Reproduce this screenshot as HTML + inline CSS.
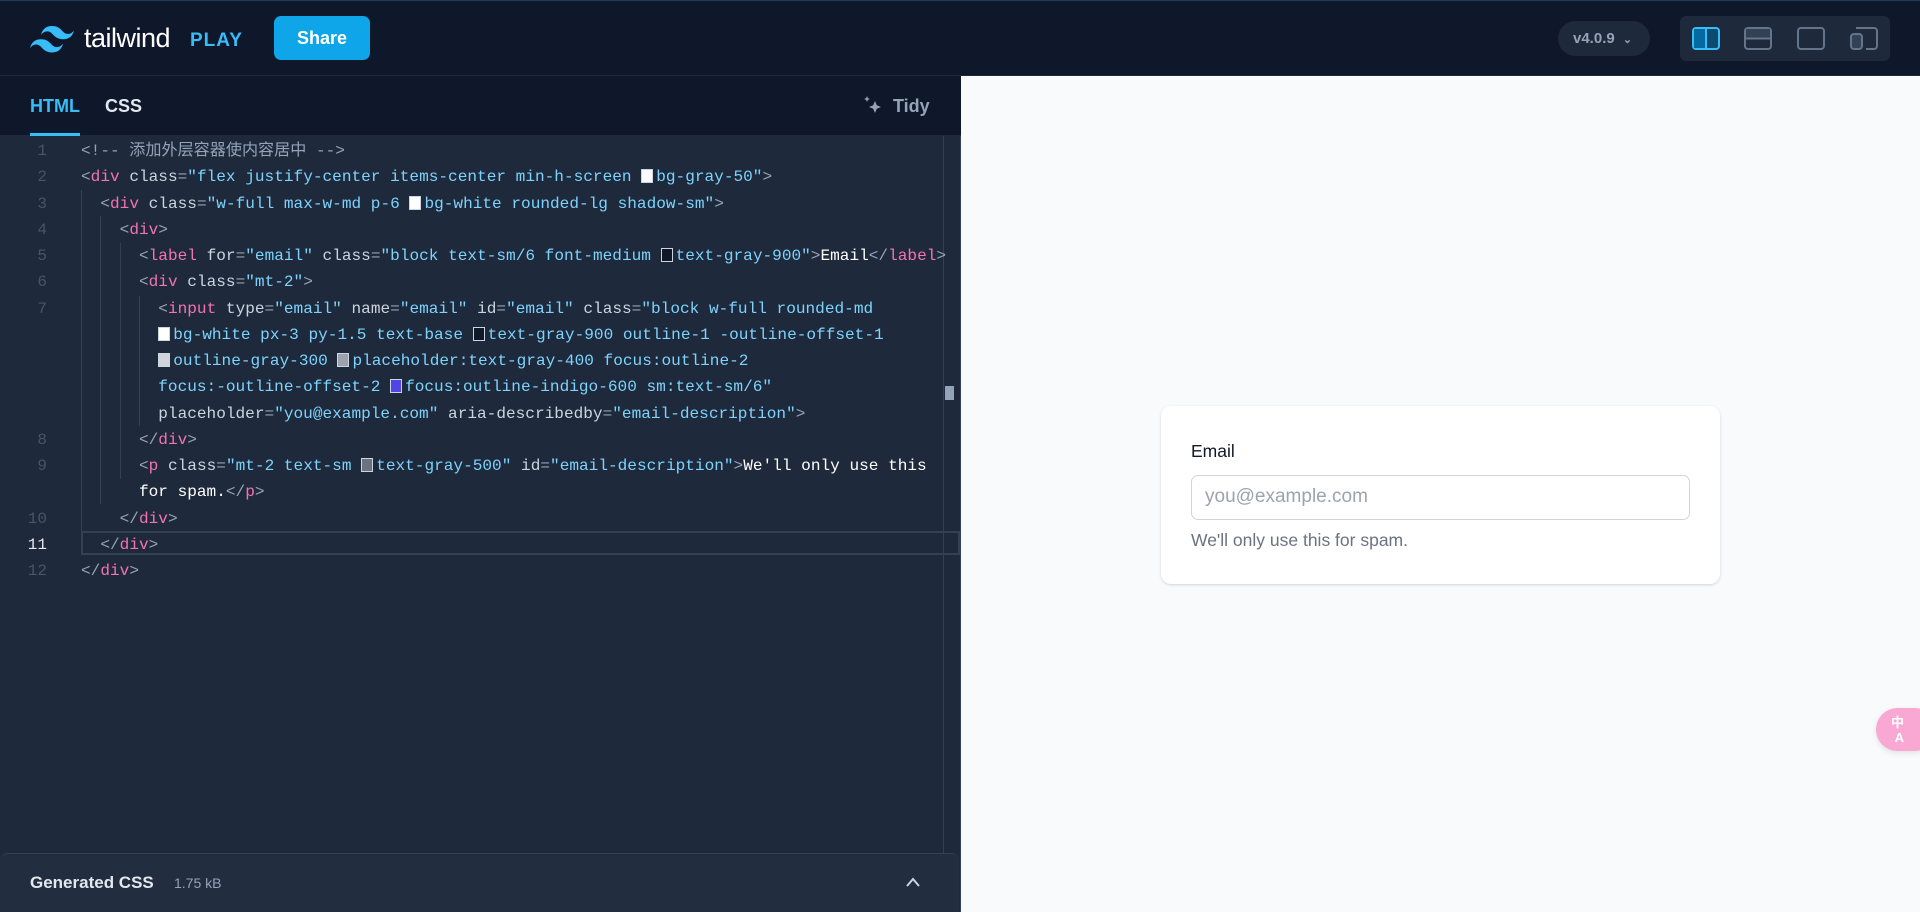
<!DOCTYPE html>
<html><head><meta charset="utf-8"><style>
*{box-sizing:border-box;margin:0;padding:0}
body{width:1920px;height:912px;overflow:hidden;background:#0f172a;font-family:"Liberation Sans","Noto Sans CJK SC",sans-serif;position:relative}
.hdr{position:absolute;left:0;top:0;width:1920px;height:76px;background:#0f172a;border-top:1px solid #1e3a5f;border-bottom:1px solid #1e293b}
.tabs{position:absolute;left:0;top:76px;width:961px;height:60px;background:#0f172a;border-bottom:1px solid #1e293b}
.ed{position:absolute;left:0;top:136px;width:961px;height:776px;background:#1e293b;border-right:1px solid #334155}
.code{position:absolute;left:0;top:2px;font-family:"Liberation Mono","Noto Sans CJK SC",monospace;font-size:16.1px;line-height:26.25px;white-space:pre;color:#cbd5e1}
.ln{position:absolute;left:0;width:47px;text-align:right;color:#475569;font-family:"Liberation Mono",monospace;font-size:16px;line-height:26.25px;margin-top:2px}
.t{color:#f472b6}.p{color:#94a3b8}.s{color:#7dd3fc}.a{color:#cbd5e1}.w{color:#fff}.c{color:#94a3b8}
.sw{display:inline-block;width:12px;height:14px;border:1px solid #cbd5e1;vertical-align:-2px;margin-right:3px}
.guide{position:absolute;width:1px;background:#334155}
.right{position:absolute;left:961px;top:76px;width:959px;height:836px;background:#f9fafb}
.card{position:absolute;left:200px;top:330px;width:559px;height:178px;background:#fff;border-radius:10px;box-shadow:0 1px 3px rgba(0,0,0,.1),0 1px 2px rgba(0,0,0,.06);padding:30px}
</style></head><body>
<div class="hdr">
 <svg style="position:absolute;left:30px;top:25px" width="44" height="27" viewBox="0 0 54 33"><path fill="#38bdf8" d="M27 0c-7.2 0-11.7 3.6-13.5 10.8 2.7-3.6 5.850-4.95 9.45-4.05 2.054.513 3.522 2.004 5.147 3.653C30.744 13.090 33.808 16.2 40.5 16.2c7.2 0 11.7-3.6 13.5-10.8-2.7 3.6-5.85 4.95-9.45 4.05-2.054-.513-3.522-2.004-5.147-3.653C36.756 3.110 33.692 0 27 0zM13.5 16.2C6.3 16.2 1.8 19.8 0 27c2.7-3.6 5.85-4.95 9.45-4.05 2.054.514 3.522 2.004 5.147 3.653C17.244 29.29 20.308 32.4 27 32.4c7.2 0 11.7-3.6 13.5-10.8-2.7 3.6-5.85 4.95-9.45 4.05-2.054-.513-3.522-2.004-5.147-3.653C23.256 19.31 20.192 16.2 13.5 16.2z"/></svg>
 <div style="position:absolute;left:84px;top:22px;color:#fff;font-size:27px;font-weight:500;letter-spacing:-0.5px">tailwind</div>
 <div style="position:absolute;left:190px;top:29px;color:#38bdf8;font-size:19px;font-weight:700;letter-spacing:1px">PLAY</div>
 <div style="position:absolute;left:274px;top:15px;width:96px;height:44px;background:#0ea5e9;border-radius:7px;color:#fff;font-weight:700;font-size:18px;line-height:44px;text-align:center">Share</div>
 <div style="position:absolute;left:1558px;top:20px;width:92px;height:35px;background:#1e293b;border-radius:18px;color:#94a3b8;font-weight:700;font-size:15px;line-height:35px;padding-left:15px">v4.0.9 <span style="font-size:11px;margin-left:4px">&#8964;</span></div>
 <div style="position:absolute;left:1680px;top:15px;width:210px;height:45px;background:#1e293b;border-radius:6px">
  <svg style="position:absolute;left:12px;top:11px" width="28" height="23"><rect x="1" y="1" width="26" height="21" rx="3" fill="#0c4a6e" stroke="#38bdf8" stroke-width="2"/><rect x="2" y="2" width="11" height="19" fill="#0369a1"/><line x1="14" y1="1" x2="14" y2="22" stroke="#38bdf8" stroke-width="2"/></svg>
  <svg style="position:absolute;left:64px;top:11px" width="28" height="23"><rect x="1" y="1" width="26" height="21" rx="3" fill="none" stroke="#64748b" stroke-width="2"/><rect x="2" y="2" width="24" height="9" fill="#334155"/><line x1="1" y1="11.5" x2="27" y2="11.5" stroke="#64748b" stroke-width="2"/></svg>
  <svg style="position:absolute;left:117px;top:11px" width="28" height="23"><rect x="1" y="1" width="26" height="21" rx="3" fill="none" stroke="#64748b" stroke-width="2"/></svg>
  <svg style="position:absolute;left:170px;top:11px" width="28" height="23"><path d="M6 1h18a3 3 0 0 1 3 3v15a3 3 0 0 1-3 3H16" fill="none" stroke="#64748b" stroke-width="2"/><rect x="1" y="7" width="11" height="15" rx="3" fill="#334155" stroke="#64748b" stroke-width="2"/></svg>
 </div>
</div>
<div class="tabs">
 <div style="position:absolute;left:30px;top:20px;color:#38bdf8;font-weight:700;font-size:18px">HTML</div>
 <div style="position:absolute;left:30px;top:57px;width:50px;height:3px;background:#38bdf8"></div>
 <div style="position:absolute;left:105px;top:20px;color:#e2e8f0;font-weight:700;font-size:18px">CSS</div>
 <svg style="position:absolute;left:862px;top:19px" width="22" height="22" viewBox="0 0 22 22"><path fill="#94a3b8" d="M13 6l1.8 4.2L19 12l-4.2 1.8L13 18l-1.8-4.2L7 12l4.2-1.8zM5 1l.9 2.1L8 4l-2.1.9L5 7l-.9-2.1L2 4l2.1-.9z"/></svg>
 <div style="position:absolute;left:893px;top:20px;color:#94a3b8;font-weight:700;font-size:18px">Tidy</div>
</div>
<div class="ed">
 <div class="ln" style="top:0">1</div><div class="ln" style="top:26.25px">2</div><div class="ln" style="top:52.5px">3</div><div class="ln" style="top:78.75px">4</div><div class="ln" style="top:105px">5</div><div class="ln" style="top:131.25px">6</div><div class="ln" style="top:157.5px">7</div><div class="ln" style="top:288.75px">8</div><div class="ln" style="top:315px">9</div><div class="ln" style="top:367.5px">10</div><div class="ln" style="top:393.75px;color:#e2e8f0">11</div><div class="ln" style="top:420px">12</div>
 <div style="position:absolute;left:81px;top:395px;width:879px;height:24px;border:2px solid #334155"></div>
 <div class="guide" style="left:81px;top:54px;height:341px"></div>
 <div class="guide" style="left:100px;top:80px;height:288px"></div>
 <div class="guide" style="left:120px;top:107px;height:236px"></div>
 <div class="guide" style="left:139px;top:160px;height:130px"></div>
 <div class="guide" style="left:943px;top:0;height:720px"></div>
 <div style="position:absolute;left:945px;top:250px;width:9px;height:14px;background:#94a3b8"></div>
<div class="code" style="left:81px"><span class="c">&lt;!-- 添加外层容器使内容居中 --&gt;</span>
<span class="p">&lt;</span><span class="t">div</span> <span class="a">class</span><span class="p">=</span><span class="s">"flex justify-center items-center min-h-screen <span class="sw" style="background:#f9fafb"></span>bg-gray-50"</span><span class="p">&gt;</span>
  <span class="p">&lt;</span><span class="t">div</span> <span class="a">class</span><span class="p">=</span><span class="s">"w-full max-w-md p-6 <span class="sw" style="background:#fff"></span>bg-white rounded-lg shadow-sm"</span><span class="p">&gt;</span>
    <span class="p">&lt;</span><span class="t">div</span><span class="p">&gt;</span>
      <span class="p">&lt;</span><span class="t">label</span> <span class="a">for</span><span class="p">=</span><span class="s">"email"</span> <span class="a">class</span><span class="p">=</span><span class="s">"block text-sm/6 font-medium <span class="sw" style="background:#111827"></span>text-gray-900"</span><span class="p">&gt;</span><span class="w">Email</span><span class="p">&lt;/</span><span class="t">label</span><span class="p">&gt;</span>
      <span class="p">&lt;</span><span class="t">div</span> <span class="a">class</span><span class="p">=</span><span class="s">"mt-2"</span><span class="p">&gt;</span>
        <span class="p">&lt;</span><span class="t">input</span> <span class="a">type</span><span class="p">=</span><span class="s">"email"</span> <span class="a">name</span><span class="p">=</span><span class="s">"email"</span> <span class="a">id</span><span class="p">=</span><span class="s">"email"</span> <span class="a">class</span><span class="p">=</span><span class="s">"block w-full rounded-md</span>
        <span class="s"><span class="sw" style="background:#fff"></span>bg-white px-3 py-1.5 text-base <span class="sw" style="background:#111827"></span>text-gray-900 outline-1 -outline-offset-1</span>
        <span class="s"><span class="sw" style="background:#d1d5db"></span>outline-gray-300 <span class="sw" style="background:#9ca3af"></span>placeholder:text-gray-400 focus:outline-2</span>
        <span class="s">focus:-outline-offset-2 <span class="sw" style="background:#4f46e5"></span>focus:outline-indigo-600 sm:text-sm/6"</span>
        <span class="a">placeholder</span><span class="p">=</span><span class="s">"you@example.com"</span> <span class="a">aria-describedby</span><span class="p">=</span><span class="s">"email-description"</span><span class="p">&gt;</span>
      <span class="p">&lt;/</span><span class="t">div</span><span class="p">&gt;</span>
      <span class="p">&lt;</span><span class="t">p</span> <span class="a">class</span><span class="p">=</span><span class="s">"mt-2 text-sm <span class="sw" style="background:#6b7280"></span>text-gray-500"</span> <span class="a">id</span><span class="p">=</span><span class="s">"email-description"</span><span class="p">&gt;</span><span class="w">We'll only use this</span>
      <span class="w">for spam.</span><span class="p">&lt;/</span><span class="t">p</span><span class="p">&gt;</span>
    <span class="p">&lt;/</span><span class="t">div</span><span class="p">&gt;</span>
  <span class="p">&lt;/</span><span class="t">div</span><span class="p">&gt;</span>
<span class="p">&lt;/</span><span class="t">div</span><span class="p">&gt;</span></div>
 <div style="position:absolute;left:0;top:717px;width:959px;height:59px;background:#222d3f;border-top:1px solid #334155;border-radius:8px 8px 0 0">
  <span style="position:absolute;left:30px;top:19px;color:#e2e8f0;font-weight:700;font-size:17px">Generated CSS</span>
  <span style="position:absolute;left:174px;top:21px;color:#94a3b8;font-size:14px">1.75 kB</span>
  <svg style="position:absolute;left:905px;top:22px" width="16" height="12"><path d="M2 10l6-7 6 7" fill="none" stroke="#cbd5e1" stroke-width="2"/></svg>
 </div>
</div>
<div class="right">
 <div class="card">
  <div style="font-size:17.5px;line-height:30px;color:#111827;font-weight:500">Email</div>
  <div style="margin-top:9px;height:45px;border:1.5px solid #d1d5db;border-radius:7px;font-size:19px;line-height:42px;padding-left:13px;color:#9ca3af">you@example.com</div>
  <div style="margin-top:8px;font-size:17.5px;line-height:25px;color:#6b7280">We'll only use this for spam.</div>
 </div>
 <div style="position:absolute;left:915px;top:632px;width:60px;height:43px;background:#f9a8d4;border-radius:22px;box-shadow:0 2px 6px rgba(0,0,0,.1);color:#fff;font-size:13px;font-weight:700;line-height:15px;padding:7px 0 0 15px">中<br>&nbsp;A</div>
</div>
</body></html>
